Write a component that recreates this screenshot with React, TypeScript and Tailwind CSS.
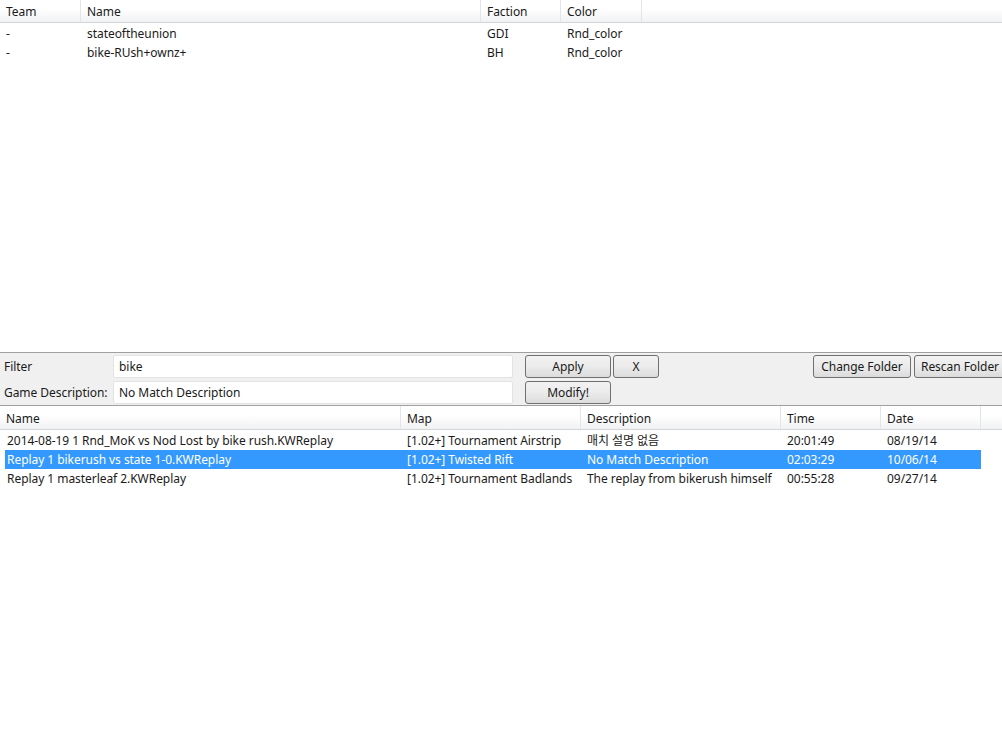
const font = { fontFamily: '"Noto Sans", "Noto Sans CJK KR", sans-serif', letterSpacing: "-0.05px" };

const players = [
  { team: "-", name: "stateoftheunion", faction: "GDI", color: "Rnd_color" },
  { team: "-", name: "bike-RUsh+ownz+", faction: "BH", color: "Rnd_color" },
];

const replays = [
  {
    name: "2014-08-19 1 Rnd_MoK vs Nod Lost by bike rush.KWReplay",
    map: "[1.02+] Tournament Airstrip",
    desc: "매치 설명 없음",
    time: "20:01:49",
    date: "08/19/14",
  },
  {
    name: "Replay 1 bikerush vs state 1-0.KWReplay",
    map: "[1.02+] Twisted Rift",
    desc: "No Match Description",
    time: "02:03:29",
    date: "10/06/14",
    selected: true,
  },
  {
    name: "Replay 1 masterleaf 2.KWReplay",
    map: "[1.02+] Tournament Badlands",
    desc: "The replay from bikerush himself",
    time: "00:55:28",
    date: "09/27/14",
  },
];

function HeaderCell({ label, w }: { label: string; w: string }) {
  return (
    <div className={`${w} shrink-0 h-full border-r border-[#e3e5e8] pl-[6px] pt-[2px] flex items-center`}>
      {label}
    </div>
  );
}

function Btn({ label, w }: { label: string; w: string }) {
  return (
    <button
      className={`${w} h-[23px] rounded-[3px] border border-[#707070] bg-gradient-to-b from-[#f2f2f2] via-[#ebebeb] to-[#dcdcdc] text-[12px] text-[#1a1a1a] flex items-center justify-center`}
    >
      {label}
    </button>
  );
}

export default function App() {
  return (
    <div className="w-[1002px] h-[755px] bg-white text-[12px] text-[#1a1a1a] flex flex-col overflow-hidden" style={font}>
      {/* players pane */}
      <div className="h-[352px] shrink-0 flex flex-col">
        <div className="h-[23px] flex border-b border-[#d5d5d5] bg-gradient-to-b from-white from-40% to-[#f1f2f4]">
          <HeaderCell label="Team" w="w-[81px]" />
          <HeaderCell label="Name" w="w-[400px]" />
          <HeaderCell label="Faction" w="w-[80px]" />
          <HeaderCell label="Color" w="w-[81px]" />
        </div>
        <div className="pt-[1px]">
          {players.map((p) => (
            <div key={p.name} className="h-[19px] flex items-center">
              <div className="w-[81px] pl-[6px]">{p.team}</div>
              <div className="w-[400px] pl-[6px]">{p.name}</div>
              <div className="w-[80px] pl-[6px]">{p.faction}</div>
              <div className="w-[81px] pl-[6px]">{p.color}</div>
            </div>
          ))}
        </div>
      </div>

      {/* filter panel */}
      <div className="h-[54px] shrink-0 bg-[#f0f0f0] border-t border-b border-[#a0a0a0] flex pt-[2px]">
        <div className="flex flex-col gap-[3px]">
          <div className="flex items-center h-[23px]">
            <div className="w-[113px] pl-[4px]">Filter</div>
            <div className="w-[400px] h-[23px] bg-white border border-[#e3e3e3] rounded-[2px] pl-[5px] flex items-center">bike</div>
            <div className="ml-[12px] flex gap-[2px]">
              <Btn label="Apply" w="w-[86px]" />
              <Btn label="X" w="w-[46px]" />
            </div>
          </div>
          <div className="flex items-center h-[23px]">
            <div className="w-[113px] pl-[4px]">Game Description:</div>
            <div className="w-[400px] h-[23px] bg-white border border-[#e3e3e3] rounded-[2px] pl-[5px] flex items-center">No Match Description</div>
            <div className="ml-[12px]">
              <Btn label="Modify!" w="w-[86px]" />
            </div>
          </div>
        </div>
        <div className="ml-auto flex gap-[3px] mr-[-4px]">
          <Btn label="Change Folder" w="w-[98px]" />
          <Btn label="Rescan Folder" w="w-[92px]" />
        </div>
      </div>

      {/* replay list */}
      <div className="flex-1 flex flex-col">
        <div className="h-[24px] shrink-0 flex border-b border-[#d5d5d5] bg-gradient-to-b from-white from-40% to-[#f1f2f4]">
          <HeaderCell label="Name" w="w-[401px]" />
          <HeaderCell label="Map" w="w-[180px]" />
          <HeaderCell label="Description" w="w-[200px]" />
          <HeaderCell label="Time" w="w-[100px]" />
          <HeaderCell label="Date" w="w-[100px]" />
        </div>
        <div className="pt-[1px]">
          {replays.map((r) => (
            <div
              key={r.name}
              className={`h-[19px] flex items-center ml-[5px] w-[976px] ${r.selected ? "bg-[#3399ff] text-white" : ""}`}
            >
              <div className="w-[396px] pl-[2px] whitespace-nowrap">{r.name}</div>
              <div className="w-[180px] pl-[6px] whitespace-nowrap">{r.map}</div>
              <div className="w-[200px] pl-[6px] whitespace-nowrap">{r.desc}</div>
              <div className="w-[100px] pl-[6px]">{r.time}</div>
              <div className="w-[100px] pl-[6px]">{r.date}</div>
            </div>
          ))}
        </div>
      </div>
    </div>
  );
}
